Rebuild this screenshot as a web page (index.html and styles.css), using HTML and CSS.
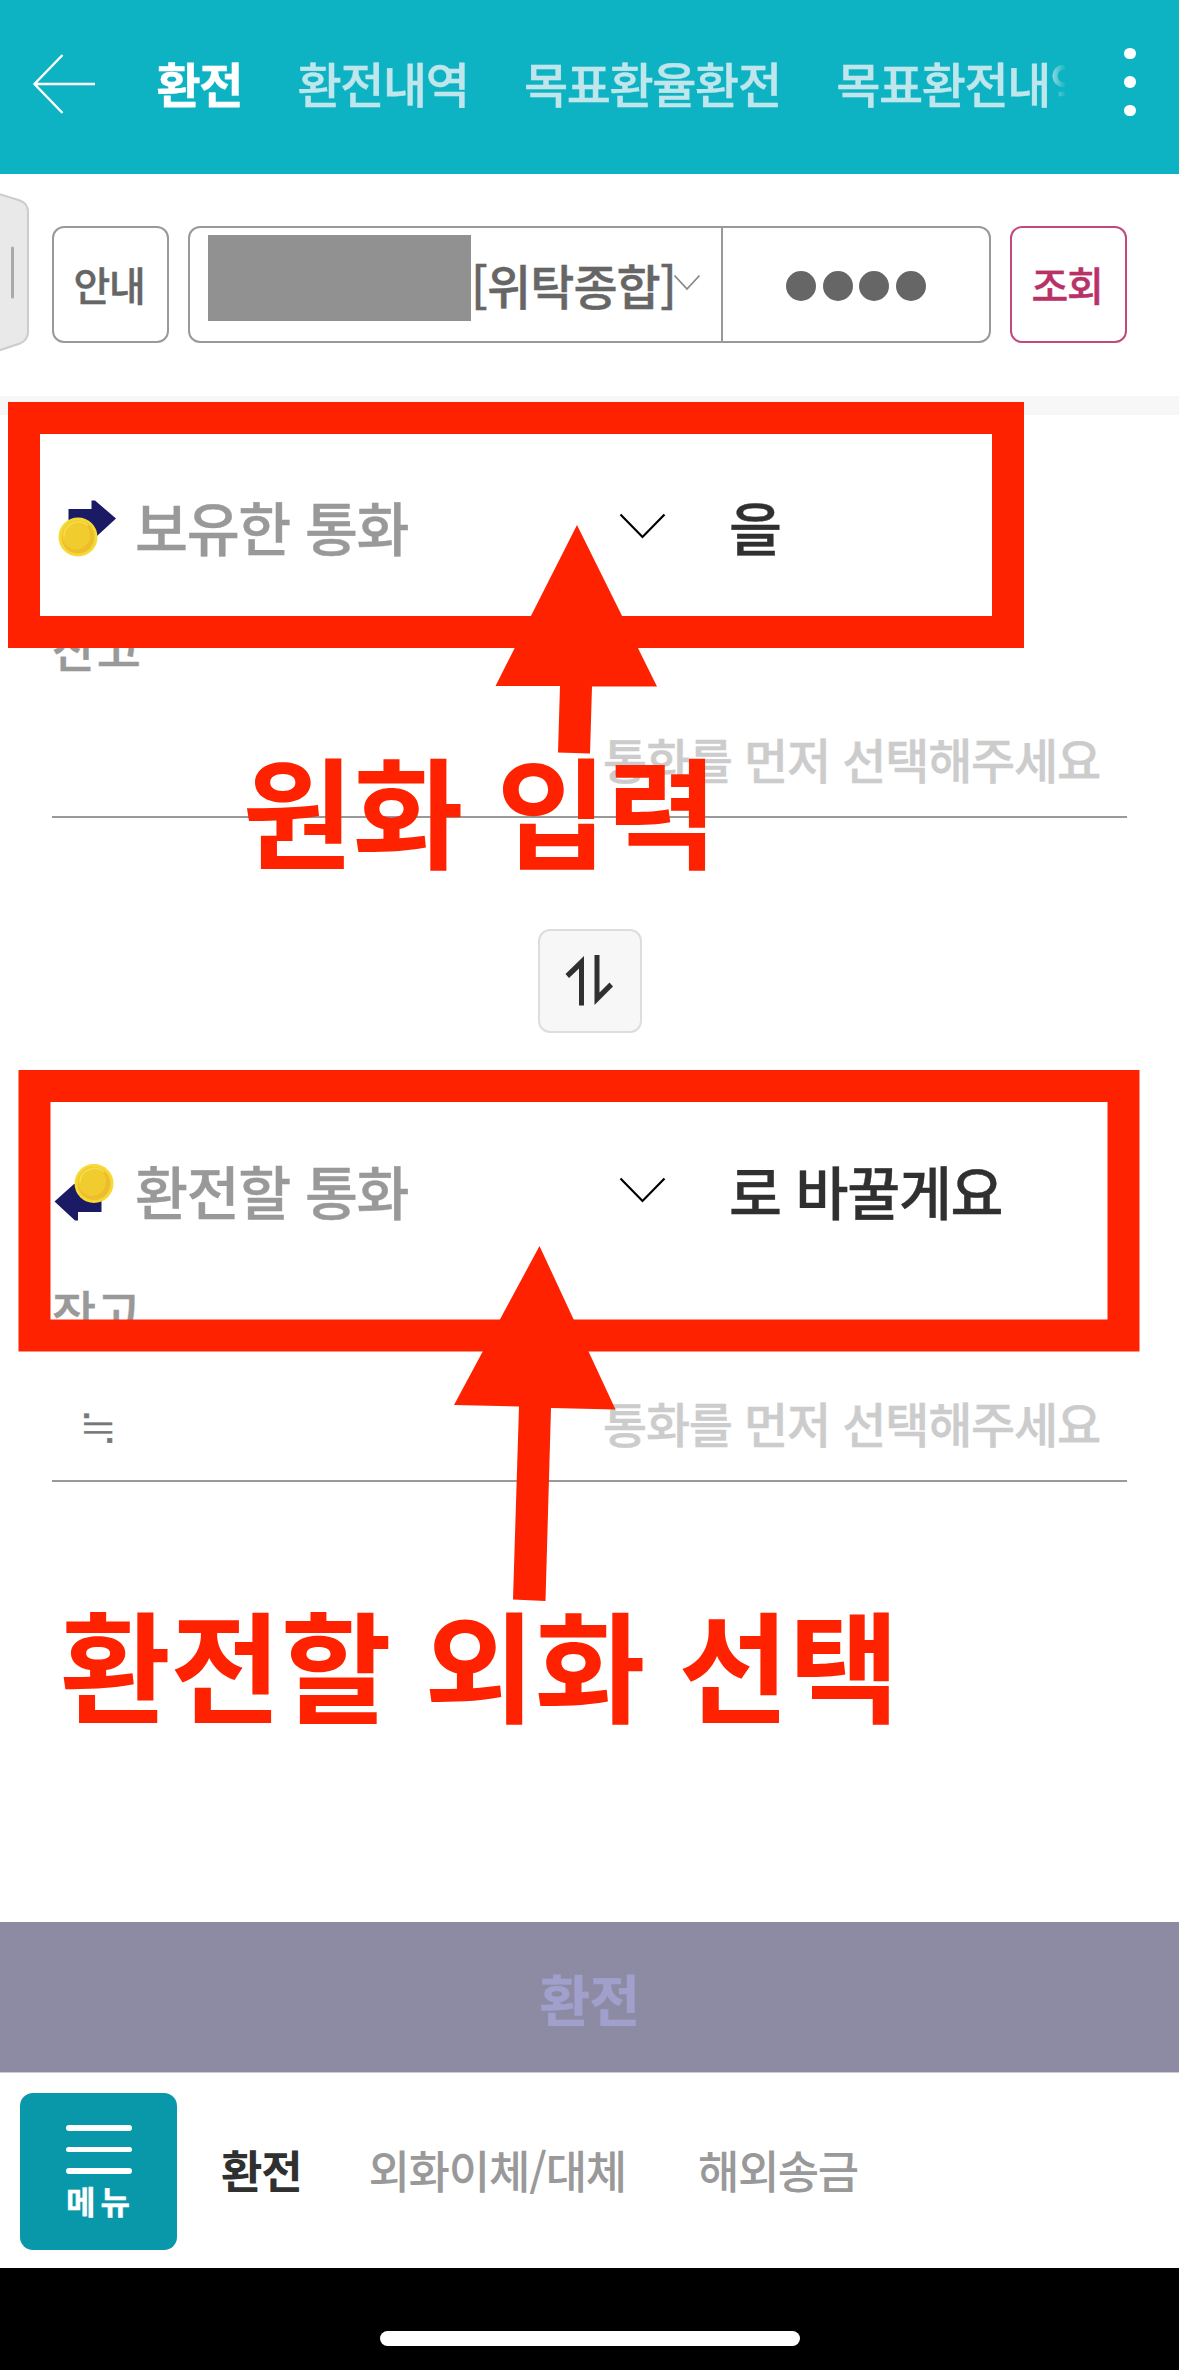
FILE: index.html
```html
<!DOCTYPE html>
<html lang="ko">
<head>
<meta charset="utf-8">
<title>환전</title>
<link rel="stylesheet" href="styles.css">
</head>
<body>
<div class="screen">
  <header class="topbar">
    <svg class="back" width="64" height="62" viewBox="0 0 64 62" fill="none" stroke="#fff" stroke-width="2.4"><path d="M30.5 2 2.500 31 30.500 60M2.500 31H63"/></svg>
    <nav class="tabs">
      <span class="tab tab-on">환전</span>
      <span class="tab">환전내역</span>
      <span class="tab">목표환율환전</span>
      <span class="tab">목표환전내역</span>
    </nav>
    <div class="more"><i></i><i></i><i></i></div>
  </header>

  <section class="filter">
    <button class="box guide">안내</button>
    <div class="box account">
      <div class="select">
        <span class="mask"></span>
        <span class="acct-type">[위탁종합]</span>
        <svg class="chev-sm" width="28" height="17" viewBox="0 0 28 17" fill="none" stroke="#888" stroke-width="1.800"><path d="M1.500 1.500 14 15 26.500 1.500"/></svg>
      </div>
      <div class="pin"><i></i><i></i><i></i><i></i></div>
    </div>
    <button class="box query">조회</button>
    <svg class="side-tab" width="32" height="170" viewBox="0 0 32 170"><path d="M-4 4 20 11.500Q28 14.500 28 23V143Q28 151 20 154.500L-4 162.500Z" fill="#e9e9e9" stroke="#ccc" stroke-width="2"/><path d="M12.500 59V108" stroke="#aaa" stroke-width="3" stroke-linecap="round"/></svg>
  </section>

  <div class="strip"></div>

  <main class="exchange">
    <section class="money">
      <div class="currency">
        <svg class="coin" width="64" height="60" viewBox="0 0 64 60"><path d="M16.500 10H39.500V1.500H43L64 19.500 45 37H16.500Z" fill="#1b1a64"/><ellipse cx="26" cy="38" rx="19.500" ry="19.500" fill="#f6d935"/><circle cx="26" cy="38" r="16.500" fill="#edbd2d"/><ellipse cx="24" cy="36" rx="14" ry="14.500" fill="#f1cc2e"/><path d="M12 37.500a14.500 14.500 0 0 1 24-11" fill="none" stroke="#f6dc4d" stroke-width="1.500"/></svg>
        <span class="name">보유한 통화</span>
        <svg class="chev" width="47" height="26" viewBox="0 0 47 26" fill="none" stroke="#000" stroke-width="2.200"><path d="M1.500 1.500 23.500 24 45.500 1.500"/></svg>
        <span class="particle">을</span>
      </div>
      <div class="balance">잔고</div>
      <div class="amount"><span></span><span class="hint">통화를 먼저 선택해주세요</span></div>
    </section>

    <div class="swap-row">
      <button class="swap"><svg width="50" height="53" viewBox="0 0 50 53" fill="#303030"><path d="M19 1V50.500H14V13.500L4 23 .500 19ZM29.500 0H34.500V37.500L44.500 27.500 48 31.500 29.500 50Z"/></svg></button>
    </div>

    <section class="money">
      <div class="currency">
        <svg class="coin" width="64" height="60" viewBox="0 0 64 60"><path d="M49.500 49H26V57.500H23L2.500 38.500 22 21H49.500Z" fill="#1b1a64"/><circle cx="42" cy="20.500" r="19.500" fill="#f6d935"/><circle cx="42" cy="20.500" r="16.500" fill="#edbd2d"/><ellipse cx="40" cy="18.500" rx="14" ry="14.500" fill="#f1cc2e"/><path d="M28 20a14.500 14.500 0 0 1 24-11" fill="none" stroke="#f6dc4d" stroke-width="1.500"/></svg>
        <span class="name">환전할 통화</span>
        <svg class="chev" width="47" height="26" viewBox="0 0 47 26" fill="none" stroke="#000" stroke-width="2.200"><path d="M1.500 1.500 23.500 24 45.500 1.500"/></svg>
        <span class="particle">로 바꿀게요</span>
      </div>
      <div class="balance">잔고</div>
      <div class="amount"><span class="approx">≒</span><span class="hint">통화를 먼저 선택해주세요</span></div>
    </section>
  </main>

  <button class="submit">환전</button>

  <nav class="bottombar">
    <div class="menu"><i></i><i></i><i></i><span>메뉴</span></div>
    <span class="link link-on">환전</span>
    <span class="link">외화이체/대체</span>
    <span class="link link-last">해외송금</span>
  </nav>
  <div class="home"><i></i></div>

  <svg class="notes" width="1179" height="2370" viewBox="0 0 1179 2370" fill="#ff2200">
    <rect x="24" y="418" width="984" height="214" fill="none" stroke="#ff2200" stroke-width="32"/>
    <path d="M577 525 657 686.500H592L590 753.500 558 752.500 560 686H495.500Z"/>
    <text class="note" x="242.500" y="860">원화 입력</text>
    <rect x="34.500" y="1086" width="1089" height="249.500" fill="none" stroke="#ff2200" stroke-width="32"/>
    <path d="M539.500 1246 615.500 1409.500 551 1408 545.500 1601 513 1599.500 519 1406.500 454 1405Z"/>
    <text class="note" x="60" y="1714">환전할 외화 선택</text>
  </svg>
</div>
</body>
</html>
```

FILE: styles.css
```css
* { box-sizing: border-box; }
body {
  margin: 0;
  background: #fff;
  color: #303030;
  font-family: "Noto Sans CJK KR", "Noto Sans", sans-serif;
  font-weight: 500;
  letter-spacing: -1.2px;
  -webkit-text-stroke-width: .4px;
}
button {
  font: inherit;
  letter-spacing: inherit;
  padding: 0;
  margin: 0;
}
.screen {
  position: relative;
  width: 1179px;
  height: 2370px;
  overflow: hidden;
  display: flex;
  flex-direction: column;
}

/* top bar */
.topbar {
  height: 174px;
  flex: none;
  display: flex;
  align-items: center;
  padding: 0 43.500px 7px 32px;
  background: #0db3c2;
}
.back { flex: none; }
.tabs {
  flex: 1;
  display: flex;
  gap: 55.500px;
  margin: 0 0 4px 60.500px;
  overflow: hidden;
  font-size: 48px;
  line-height: 70px;
  letter-spacing: -1.400px;
  color: #bfe6ec;
  white-space: nowrap;
  mask-image: linear-gradient(to right, #000 890px, transparent 909px);
}
.tab-on { color: #fff; font-weight: 700; }
.more {
  display: flex;
  flex-direction: column;
  gap: 17px;
  margin: 0 0 3px 56px;
}
.more i { width: 11.500px; height: 11.500px; border-radius: 50%; background: #fff; }

/* account filter */
.filter {
  position: relative;
  height: 222px;
  flex: none;
  display: flex;
  align-items: flex-start;
  padding: 52px 52px 0;
  gap: 19px;
}
.box {
  height: 117px;
  border: 2px solid #999;
  border-radius: 12px;
  background: #fff;
  color: #666;
}
.guide, .query { width: 117px; font-size: 40px; flex: none; padding: 0 3px 1px 0; }
.query { color: #b83268; border-color: #c04a7c; }
.account { flex: 1; display: flex; }
.select {
  width: 533px;
  display: flex;
  align-items: center;
  border-right: 2px solid #999;
  padding-left: 18px;
}
.mask { width: 263px; height: 86px; flex: none; background: #919191; margin-bottom: 13px; }
.acct-type { font-size: 48px; line-height: 70px; letter-spacing: -1px; margin-bottom: 2px; white-space: nowrap; }
.chev-sm { flex: none; margin: 0 0 4px -3px; }
.pin { flex: 1; display: flex; align-items: center; justify-content: center; gap: 6.500px; padding: 2px 0 0 0; }
.pin i { width: 30px; height: 30px; border-radius: 50%; background: #666; }
.side-tab { position: absolute; left: 0; top: 15px; }

.strip { height: 19px; flex: none; background: #f7f7f7; }

/* exchange form */
.exchange { height: 1507px; flex: none; padding: 61px 52px 0; }
.currency { height: 105px; display: flex; align-items: center; font-size: 57.600px; line-height: 84px; letter-spacing: -1.300px; }
.coin { flex: none; }
.name { width: 482px; margin: 0 0 6px 19px; color: #999; }
.particle { margin-bottom: 6px; }
.chev { flex: none; margin: 0 63px 6px 2px; }
.balance { margin-top: 30px; font-size: 48px; line-height: 70px; height: 70px; letter-spacing: .5px; color: #999; }
.amount {
  height: 137px;
  display: flex;
  align-items: center;
  justify-content: space-between;
  padding: 18px 27px 0 27px;
  border-bottom: 2px solid #999;
  font-size: 48px;
}
.hint { color: #ccc; }
.approx { font-size: 48px; color: #777; font-weight: 400; }
.swap-row { height: 322px; display: flex; justify-content: center; align-items: center; padding-top: 4px; }
.swap {
  width: 104px;
  height: 104px;
  border: 2px solid #ddd;
  border-radius: 12px;
  background: #f7f7f7;
  display: flex;
  align-items: center;
  justify-content: center;
}

.submit {
  height: 150px;
  flex: none;
  border: 0;
  background: #8c8ba3;
  color: #a1a0cc;
  font-size: 55px;
  font-weight: 700;
  letter-spacing: -.5px;
}

/* bottom navigation */
.bottombar {
  height: 196px;
  flex: none;
  display: flex;
  align-items: center;
  padding: 1px 0 0 20px;
  border-top: 1px solid #ccc;
  font-size: 45px;
}
.menu {
  width: 157px;
  height: 157px;
  display: flex;
  flex-direction: column;
  align-items: center;
  gap: 16px;
  padding-top: 32.500px;
  border-radius: 13px;
  background: #0998aa;
  color: #fff;
}
.menu i { width: 66px; height: 5.500px; border-radius: 3px; background: #fff; flex: none; }
.menu span { font-size: 32px; font-weight: 700; line-height: 46px; letter-spacing: 5px; margin: -13px -4px 0 0; }
.link { color: #999; margin: 0 0 4px 67px; -webkit-text-stroke-width: 0; }
.link-on { color: #303030; font-weight: 700; margin-left: 44px; }
.link-last { margin-left: 72px; letter-spacing: -1.500px; }
.home { flex: 1; background: #000; display: flex; justify-content: center; align-items: flex-start; padding-top: 63px; }
.home i { width: 420px; height: 15px; border-radius: 8px; background: #fff; }

/* red marker annotations drawn over the form */
.notes { position: absolute; left: 0; top: 0; }
.note { font-size: 120.500px; font-weight: 700; letter-spacing: -.5px; }
```
